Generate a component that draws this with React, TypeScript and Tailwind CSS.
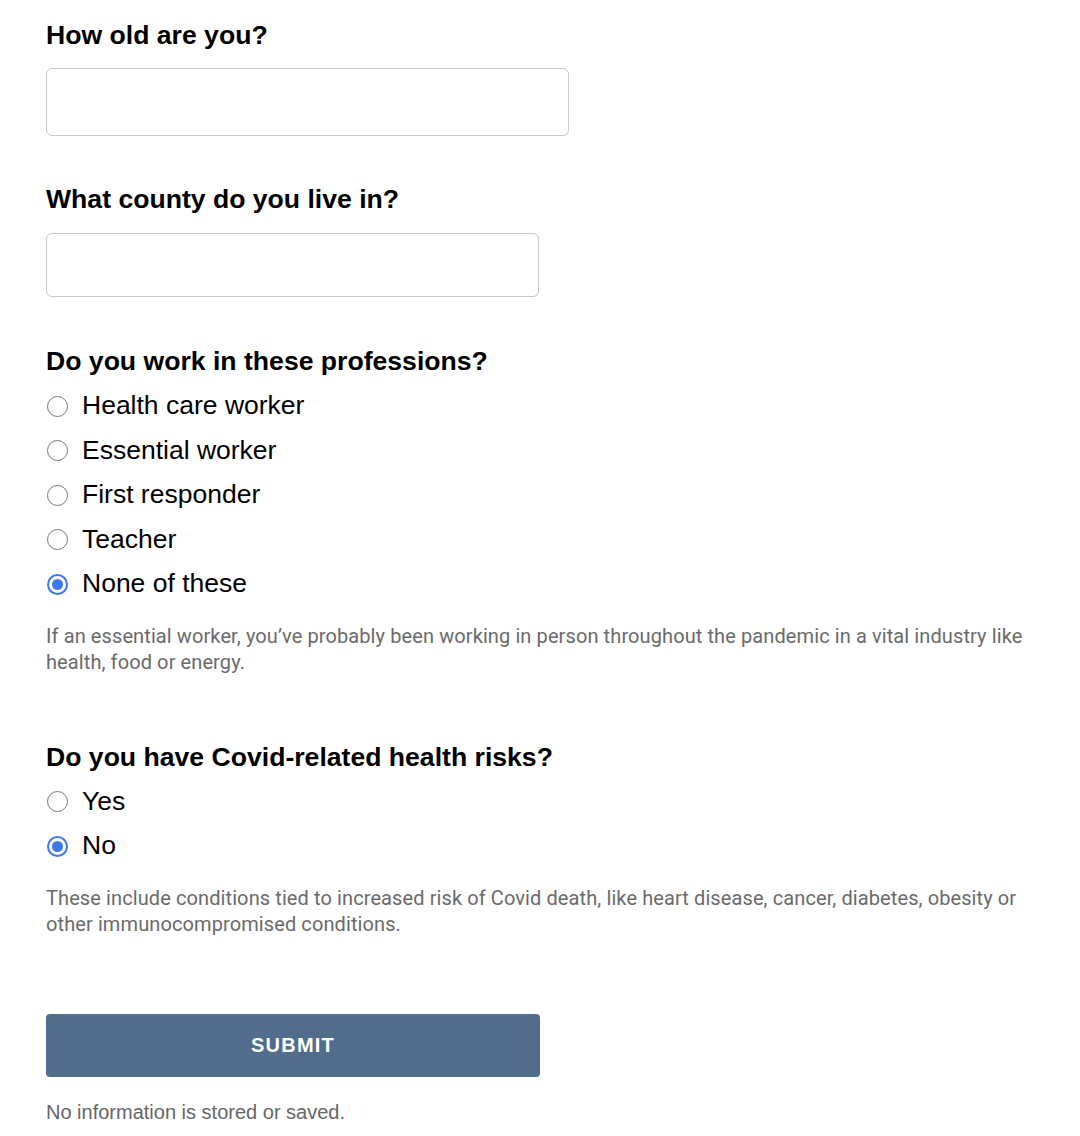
import { useState } from "react";

const heading = "text-[26.6px] leading-[36px] font-bold text-black [font-family:'Liberation_Sans',Arial,sans-serif]";
const note = "text-[20px] leading-[26px] text-[#6a6a6a] tracking-[0.1px] [font-family:Roboto,'Liberation_Sans',sans-serif]";

function Radio({ label, checked, onClick }: { label: string; checked: boolean; onClick: () => void }) {
  return (
    <label onClick={onClick} className="flex items-center h-[44.5px] cursor-pointer">
      {checked ? (
        <span className="w-[21px] h-[21px] rounded-full border-2 border-[#3e78f0] flex items-center justify-center ml-[1px]">
          <span className="w-[11px] h-[11px] rounded-full bg-[#3e78f0]" />
        </span>
      ) : (
        <span className="w-[21px] h-[21px] rounded-full border-[1.5px] border-[#777] ml-[1px]" />
      )}
      <span className="ml-[14px] text-[26.5px] text-black [font-family:'Liberation_Sans',Arial,sans-serif]">{label}</span>
    </label>
  );
}

export default function App() {
  const [job, setJob] = useState("None of these");
  const [risk, setRisk] = useState("No");
  const jobs = ["Health care worker", "Essential worker", "First responder", "Teacher", "None of these"];

  return (
    <div className="min-h-screen bg-white pl-[46px] pt-[17px] pr-[40px]">
      <h2 className={heading}>How old are you?</h2>
      <input className="mt-[15px] block w-[523px] h-[68px] rounded-[6px] border border-[#c8c8c8] outline-none px-3 text-xl" />

      <h2 className={heading + " mt-[45px]"}>What county do you live in?</h2>
      <input className="mt-[16px] block w-[493px] h-[64px] rounded-[6px] border border-[#c8c8c8] outline-none px-3 text-xl" />

      <h2 className={heading + " mt-[46px]"}>Do you work in these professions?</h2>
      <div className="mt-[5px]">
        {jobs.map(j => (
          <Radio key={j} label={j} checked={job === j} onClick={() => setJob(j)} />
        ))}
      </div>
      <p className={note + " mt-[16px]"}>
        If an essential worker, you’ve probably been working in person throughout the pandemic in a vital industry like health, food or energy.
      </p>

      <h2 className={heading + " mt-[64px]"}>Do you have Covid-related health risks?</h2>
      <div className="mt-[5px]">
        {["Yes", "No"].map(r => (
          <Radio key={r} label={r} checked={risk === r} onClick={() => setRisk(r)} />
        ))}
      </div>
      <p className={note + " mt-[16px]"}>
        These include conditions tied to increased risk of Covid death, like heart disease, cancer, diabetes, obesity or other immunocompromised conditions.
      </p>

      <button className="mt-[77px] block w-[494px] h-[63px] rounded-[4px] bg-[#526d8b] text-white text-[20px] font-bold tracking-[1.2px] [font-family:'Liberation_Sans',Arial,sans-serif]">
        SUBMIT
      </button>
      <p className="mt-[22px] text-[20px] leading-[26px] text-[#666] [font-family:'Liberation_Sans',Arial,sans-serif]">
        No information is stored or saved.
      </p>
    </div>
  );
}
